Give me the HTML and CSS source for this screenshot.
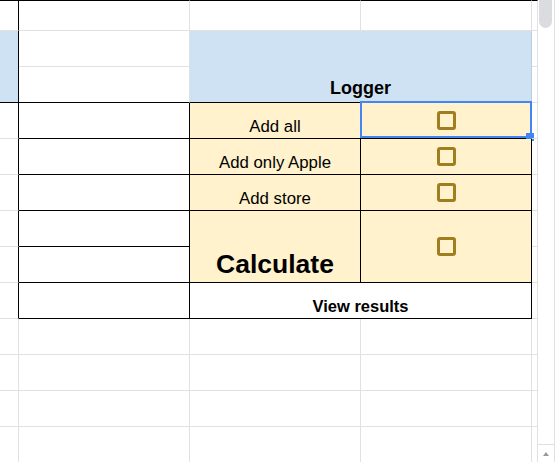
FILE: index.html
```html
<!DOCTYPE html>
<html lang="en">
<head>
    <meta charset="UTF-8">
    <meta name="viewport" content="width=device-width, initial-scale=1.0">
    <title>Logger</title>
    <link rel="stylesheet" href="styles.css">
</head>
<body>
    <div class="sheet">
        <div class="grid">
            <!-- fila superior -->
            <div class="cell top edge"></div>
            <div class="cell top"></div>
            <div class="cell top"></div>
            <div class="cell top"></div>
            <div class="cell top"></div>

            <!-- encabezado -->
            <div class="cell blue edge ruled tall"></div>
            <div class="cell"></div>
            <div class="cell blue ruled tall wide header">
                <span class="title">Logger</span>
            </div>
            <div class="cell"></div>
            <div class="cell ruled"></div>
            <div class="cell"></div>

            <!-- acciones -->
            <div class="cell edge"></div>
            <div class="cell boxed"></div>
            <div class="cell boxed yellow label">Add all</div>
            <div class="cell boxed yellow check-cell">
                <span class="check"></span>
                <div class="selection"><span class="handle"></span></div>
            </div>
            <div class="cell"></div>

            <div class="cell edge"></div>
            <div class="cell boxed"></div>
            <div class="cell boxed yellow label">Add only Apple</div>
            <div class="cell boxed yellow check-cell"><span class="check"></span></div>
            <div class="cell"></div>

            <div class="cell edge"></div>
            <div class="cell boxed"></div>
            <div class="cell boxed yellow label">Add store</div>
            <div class="cell boxed yellow check-cell"><span class="check"></span></div>
            <div class="cell"></div>

            <div class="cell edge"></div>
            <div class="cell boxed"></div>
            <div class="cell boxed yellow tall big">Calculate</div>
            <div class="cell boxed yellow tall check-cell"><span class="check"></span></div>
            <div class="cell"></div>

            <div class="cell edge"></div>
            <div class="cell boxed"></div>
            <div class="cell"></div>

            <div class="cell edge"></div>
            <div class="cell boxed"></div>
            <div class="cell boxed wide results">View results</div>
            <div class="cell"></div>

            <!-- filas vacias -->
            <div class="cell"></div><div class="cell"></div><div class="cell"></div><div class="cell"></div><div class="cell"></div>
            <div class="cell"></div><div class="cell"></div><div class="cell"></div><div class="cell"></div><div class="cell"></div>
            <div class="cell"></div><div class="cell"></div><div class="cell"></div><div class="cell"></div><div class="cell"></div>
            <div class="cell"></div><div class="cell"></div><div class="cell"></div><div class="cell"></div><div class="cell"></div>
        </div>

        <div class="scrollbar">
            <div class="thumb"></div>
            <div class="track"></div>
            <div class="arrow"><span class="arrow-up"></span></div>
        </div>
    </div>
</body>
</html>
```

FILE: styles.css
```css
body {
    font-family: "Liberation Sans", Arial, sans-serif;
    background-color: #fff;
    color: #000;
    margin: 0;
    padding: 0;
    overflow: hidden;
}
.sheet {
    display: flex;
    height: 462px;
    overflow: hidden;
}
.grid {
    display: grid;
    grid-template-columns: 19px 171px 171px 171px 6px;
    grid-template-rows: 31px repeat(12, 36px);
    width: 538px;
}
.cell {
    box-sizing: border-box;
    border-right: 1px solid #e1e1e1;
    border-bottom: 1px solid #e1e1e1;
    position: relative;
}
.top {
    border-top: 1px solid #000;
}
.edge {
    border-right-color: #000;
}
.ruled {
    border-bottom-color: #000;
}
.boxed {
    border-right-color: #000;
    border-bottom-color: #000;
}
.tall {
    grid-row: span 2;
}
.wide {
    grid-column: span 2;
}
.blue {
    background-color: #cfe2f3;
}
.header {
    border-right-color: #bccde0;
    display: flex;
    align-items: flex-end;
    justify-content: center;
    padding-bottom: 3px;
}
.title {
    font-size: 18px;
    font-weight: bold;
    line-height: 21px;
}
.yellow {
    background-color: #fff2cc;
}
.label,
.big,
.results {
    display: flex;
    align-items: flex-end;
    justify-content: center;
}
.label {
    font-size: 16.8px;
    line-height: 19px;
    padding-bottom: 2px;
}
.big {
    font-size: 26.5px;
    font-weight: bold;
    line-height: 30px;
    padding-bottom: 3px;
}
.results {
    font-size: 16.5px;
    font-weight: bold;
    line-height: 19px;
    padding-bottom: 2px;
}
.check-cell {
    display: flex;
    align-items: center;
    justify-content: center;
}
.check {
    width: 19px;
    height: 19px;
    box-sizing: border-box;
    border: 3px solid #a07d1e;
    border-radius: 3px;
}

/* seleccion activa */
.selection {
    position: absolute;
    top: -2px;
    left: -1px;
    right: -1px;
    bottom: 0;
    border: 2px solid #4285f4;
}
.handle {
    position: absolute;
    right: -4px;
    bottom: -5px;
    width: 8px;
    height: 8px;
    background-color: #4285f4;
}

/* barra de desplazamiento */
.scrollbar {
    width: 16px;
    border-right: 1px solid #e1e1e1;
    display: flex;
    flex-direction: column;
}
.thumb {
    width: 13px;
    height: 28px;
    margin-left: 1px;
    background-color: #dadce0;
    border-radius: 0 0 7px 7px;
}
.track {
    flex: 1;
}
.arrow {
    height: 17px;
    border-top: 1px solid #e1e1e1;
    display: flex;
    align-items: center;
    justify-content: center;
}
.arrow-up {
    width: 0;
    height: 0;
    border-left: 3px solid transparent;
    border-right: 3px solid transparent;
    border-bottom: 4px solid #9a9a9a;
}
```
